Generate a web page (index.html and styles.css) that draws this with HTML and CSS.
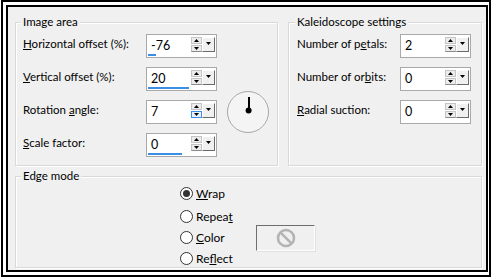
FILE: index.html
```html
<!DOCTYPE html>
<html>
<head>
<meta charset="utf-8">
<link rel="stylesheet" href="styles.css">
</head>
<body>
<div class="frame">
  <div class="dialog">
    <div class="top">
      <div class="group image-area">
        <div class="legend">Image area</div>
        <div class="rows">
          <div class="lbl"><u>H</u>orizontal offset (%):</div>
          <div class="spin">
            <div class="field"><span class="val">-76</span><span class="bar" style="width:8px"></span></div>
            <div class="updown"><span class="btn up"><svg width="5" height="3" viewBox="0 0 5 3"><path d="M2.5 0L5 3H0z"/></svg></span><span class="btn dn"><svg width="5" height="3" viewBox="0 0 5 3"><path d="M0 0H5L2.5 3z"/></svg></span></div>
            <span class="drop"><svg width="5" height="3" viewBox="0 0 5 3"><path d="M0 0H5L2.5 3z"/></svg></span>
          </div>
          <div></div>

          <div class="lbl"><u>V</u>ertical offset (%):</div>
          <div class="spin">
            <div class="field"><span class="val">20</span><span class="bar" style="width:41px"></span></div>
            <div class="updown"><span class="btn up"><svg width="5" height="3" viewBox="0 0 5 3"><path d="M2.5 0L5 3H0z"/></svg></span><span class="btn dn"><svg width="5" height="3" viewBox="0 0 5 3"><path d="M0 0H5L2.5 3z"/></svg></span></div>
            <span class="drop"><svg width="5" height="3" viewBox="0 0 5 3"><path d="M0 0H5L2.5 3z"/></svg></span>
          </div>
          <div></div>

          <div class="lbl">Rotation <u>a</u>ngle:</div>
          <div class="spin">
            <div class="field"><span class="val">7</span></div>
            <div class="updown"><span class="btn up"><svg width="5" height="3" viewBox="0 0 5 3"><path d="M2.5 0L5 3H0z"/></svg></span><span class="btn dn hot"><svg width="5" height="3" viewBox="0 0 5 3"><path d="M0 0H5L2.5 3z"/></svg></span></div>
            <span class="drop"><svg width="5" height="3" viewBox="0 0 5 3"><path d="M0 0H5L2.5 3z"/></svg></span>
          </div>
          <svg class="dial" width="44" height="44" viewBox="0 0 44 44">
            <circle cx="22" cy="22" r="20.5" fill="#f4f4f4" stroke="#a8a8a8" stroke-width="1"/>
            <line x1="23" y1="7" x2="23" y2="21" stroke="#000" stroke-width="2"/>
            <circle cx="22.6" cy="20.5" r="3" fill="#000"/>
          </svg>

          <div class="lbl"><u>S</u>cale factor:</div>
          <div class="spin">
            <div class="field"><span class="val">0</span><span class="bar" style="width:34px"></span></div>
            <div class="updown"><span class="btn up"><svg width="5" height="3" viewBox="0 0 5 3"><path d="M2.5 0L5 3H0z"/></svg></span><span class="btn dn"><svg width="5" height="3" viewBox="0 0 5 3"><path d="M0 0H5L2.5 3z"/></svg></span></div>
            <span class="drop"><svg width="5" height="3" viewBox="0 0 5 3"><path d="M0 0H5L2.5 3z"/></svg></span>
          </div>
          <div></div>
        </div>
      </div>

      <div class="group kaleido">
        <div class="legend">Kaleidoscope settings</div>
        <div class="rows">
          <div class="lbl">Number of p<u>e</u>tals:</div>
          <div class="spin">
            <div class="field"><span class="val">2</span></div>
            <div class="updown"><span class="btn up"><svg width="5" height="3" viewBox="0 0 5 3"><path d="M2.5 0L5 3H0z"/></svg></span><span class="btn dn"><svg width="5" height="3" viewBox="0 0 5 3"><path d="M0 0H5L2.5 3z"/></svg></span></div>
            <span class="drop"><svg width="5" height="3" viewBox="0 0 5 3"><path d="M0 0H5L2.5 3z"/></svg></span>
          </div>

          <div class="lbl">Number of or<u>b</u>its:</div>
          <div class="spin">
            <div class="field"><span class="val">0</span></div>
            <div class="updown"><span class="btn up"><svg width="5" height="3" viewBox="0 0 5 3"><path d="M2.5 0L5 3H0z"/></svg></span><span class="btn dn"><svg width="5" height="3" viewBox="0 0 5 3"><path d="M0 0H5L2.5 3z"/></svg></span></div>
            <span class="drop"><svg width="5" height="3" viewBox="0 0 5 3"><path d="M0 0H5L2.5 3z"/></svg></span>
          </div>

          <div class="lbl"><u>R</u>adial suction:</div>
          <div class="spin">
            <div class="field"><span class="val">0</span></div>
            <div class="updown"><span class="btn up"><svg width="5" height="3" viewBox="0 0 5 3"><path d="M2.5 0L5 3H0z"/></svg></span><span class="btn dn"><svg width="5" height="3" viewBox="0 0 5 3"><path d="M0 0H5L2.5 3z"/></svg></span></div>
            <span class="drop"><svg width="5" height="3" viewBox="0 0 5 3"><path d="M0 0H5L2.5 3z"/></svg></span>
          </div>
        </div>
      </div>
    </div>

    <div class="group edge">
      <div class="legend">Edge mode</div>
      <div class="opts">
        <div class="opt"><span class="radio on"></span><span class="otxt"><u>W</u>rap</span></div>
        <div class="opt"><span class="radio"></span><span class="otxt">Repea<u>t</u></span></div>
        <div class="opt"><span class="radio"></span><span class="otxt"><u>C</u>olor</span>
          <span class="swatch"><svg width="20" height="20" viewBox="0 0 20 20"><circle cx="10" cy="10" r="8" fill="none" stroke="#b4b4b4" stroke-width="2.6"/><line x1="4.6" y1="4.6" x2="15.4" y2="15.4" stroke="#b4b4b4" stroke-width="2.6"/></svg></span>
        </div>
        <div class="opt"><span class="radio"></span><span class="otxt">Re<u>f</u>lect</span></div>
      </div>
    </div>
  </div>
</div>
</body>
</html>
```

FILE: styles.css
```css
* { box-sizing: border-box; }

body {
  margin: 0;
  background: #fff;
  font-family: Lato, "Liberation Sans", sans-serif;
  font-size: 11.5px;
  color: #000;
}

.frame {
  margin-left: 1px;
  width: 490px;
  height: 277px;
  border: 2px solid #000;
  padding: 3px 1px 3px 3px;
  background: #fff;
}

.dialog {
  height: 100%;
  border: 2px solid #000;
  background: #f0f0f0;
  padding: 15px 4px 2px 7px;
  display: flex;
  flex-direction: column;
  gap: 10px;
}

.top {
  display: flex;
  gap: 10px;
  height: 144px;
}

.group {
  position: relative;
  border: 1px solid #d9d9d9;
  box-shadow: inset 1px 1px 0 #fff, 1px 1px 0 #fff;
}

.legend {
  position: absolute;
  top: -9px;
  left: 5px;
  padding: 0 2px;
  background: #f0f0f0;
  line-height: 16px;
}

.image-area {
  width: 263px;
  padding: 11px 0 0 7px;
}

.kaleido {
  width: 194px;
  padding: 11px 0 0 8px;
}

.kaleido .legend { left: 6px; }

.rows {
  display: grid;
  grid-template-columns: 123px 71px auto;
  grid-auto-rows: 24px;
  row-gap: 9px;
}

.kaleido .rows { grid-template-columns: 103px 71px; }

.lbl {
  line-height: 16px;
  padding-top: 2px;
  white-space: nowrap;
}

.spin {
  display: flex;
  align-items: stretch;
  width: 71px;
  height: 24px;
  border: 1px solid #a9a9a9;
  background: #fff;
  padding: 0 1px 0 0;
}

.field {
  flex: 1;
  display: flex;
  flex-direction: column;
  padding: 0 0 1px 1px;
}

.val {
  margin: 3px 0 0 3px;
  font-size: 12.5px;
  line-height: 16px;
}

.bar {
  margin-top: auto;
  height: 3px;
  background: #3a8ee6;
}

.updown {
  width: 11px;
  margin-top: 2px;
  display: flex;
  flex-direction: column;
  gap: 1px;
}

.btn {
  height: 7px;
  display: flex;
  align-items: center;
  justify-content: center;
  background: #ececec;
  border: 1px solid #c4c4c4;
}

.btn.dn { border-bottom-color: #8a8a8a; }

.btn.hot {
  background: #e5f1fb;
  border-color: #3c8fe8;
}

.drop {
  width: 13px;
  height: 15px;
  margin-top: 2px;
  display: flex;
  justify-content: center;
  padding-top: 4px;
  background: #f0f0f0;
  border-top: 1px solid #fff;
  border-left: 1px solid #fff;
  border-right: 1px solid #6a6a6a;
  border-bottom: 1px solid #6a6a6a;
}

.drop svg, .btn svg { display: block; }

.dial {
  grid-column: 3;
  grid-row: 3;
  margin: -10px 0 -10px 9px;
}

.edge {
  height: 92px;
  padding: 8px 0 0 164px;
}

.opts {
  display: flex;
  flex-direction: column;
}

.opt {
  display: flex;
  align-items: center;
  height: 17px;
  gap: 3px;
}

.opt + .opt { margin-top: 4px; }
.opt:nth-child(2) { margin-top: 6px; }

.radio {
  width: 13px;
  height: 13px;
  border-radius: 50%;
  border: 1px solid #333;
  background: #fff;
  display: flex;
  align-items: center;
  justify-content: center;
}

.radio.on::after {
  content: "";
  width: 7px;
  height: 7px;
  border-radius: 50%;
  background: #333;
}

.otxt {
  font-size: 12px;
  line-height: 16px;
  width: 57px;
}

.swatch {
  width: 59px;
  height: 26px;
  margin: -4px 0 -5px 0;
  display: flex;
  align-items: center;
  justify-content: center;
  background: #f0f0f0;
  border-top: 1px solid #6e6e6e;
  border-left: 1px solid #6e6e6e;
  border-right: 1px solid #fff;
  border-bottom: 1px solid #fff;
  box-shadow: 1px 1px 0 #e0e0e0;
}
```
